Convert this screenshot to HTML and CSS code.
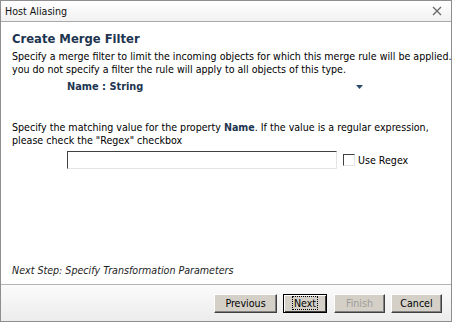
FILE: index.html
```html
<!DOCTYPE html>
<html>
    <head>
        <meta http-equiv="content-type" content="text/html; charset=utf-8" />
        <title>Host Aliasing</title>
        <link rel="stylesheet" href="styles.css">
    </head>
    <body>
        <div class="dialog">
            <div class="titlebar">
                <span class="title">Host Aliasing</span>
                <svg class="close" width="10" height="10" viewBox="0 0 10 10">
                    <path d="M1 1 L9 9 M9 1 L1 9" stroke="#6b6b6b" stroke-width="1.4" fill="none"/>
                </svg>
            </div>
            <div class="content">
                <h2>Create Merge Filter</h2>
                <p class="intro">Specify a merge filter to limit the incoming objects for which this merge rule will be applied. If<br>you do not specify a filter the rule will apply to all objects of this type.</p>
                <div class="property">
                    <span class="propname">Name : String</span>
                    <svg class="arrow" width="7" height="4" viewBox="0 0 7 4"><path d="M0 0 H7 L3.5 4 Z" fill="#2b4a6b"/></svg>
                </div>
                <p class="match">Specify the matching value for the property <b>Name</b>. If the value is a regular expression,<br>please check the "Regex" checkbox</p>
                <div class="valuerow">
                    <input type="text" class="value">
                    <label class="regex"><span class="check"></span>Use Regex</label>
                </div>
                <p class="nextstep">Next Step: Specify Transformation Parameters</p>
            </div>
            <div class="footer">
                <button class="btn prev">Previous</button>
                <button class="btn next"><span>Next</span></button>
                <button class="btn finish" disabled>Finish</button>
                <button class="btn cancel">Cancel</button>
            </div>
        </div>
    </body>
</html>
```

FILE: styles.css
```css
* {
    margin: 0;
    padding: 0;
    box-sizing: border-box;
}

body {
    width: 452px;
    height: 322px;
    overflow: hidden;
    background: #fff;
    font-family: "DejaVu Sans Condensed", "DejaVu Sans", sans-serif;
    font-size: 10.6px;
    color: #000;
}

.dialog {
    width: 452px;
    height: 322px;
    border: 1px solid #8e8e8e;
    display: flex;
    flex-direction: column;
    overflow: hidden;
}

.titlebar {
    height: 21px;
    flex: none;
    display: flex;
    align-items: center;
    justify-content: space-between;
    padding: 0 9px 0 4px;
    background: linear-gradient(#ffffff, #f1f1f1);
    border-bottom: 1px solid #a9a9a9;
}

.title {
    font-size: 10.6px;
    color: #111;
}

.content {
    flex: 1;
    padding: 9px 0 0 11px;
    overflow: hidden;
    white-space: nowrap;
    line-height: 13px;
}

h2 {
    font-family: "DejaVu Sans", sans-serif;
    font-size: 11.6px;
    font-weight: bold;
    color: #1d3550;
    line-height: 16px;
    margin-bottom: 3px;
}

.property {
    display: flex;
    align-items: center;
    width: 351px;
    justify-content: space-between;
    padding-left: 55px;
    margin-top: 4px;
}

.propname {
    font-family: "DejaVu Sans", sans-serif;
    font-weight: bold;
    font-size: 9.8px;
    color: #1d3550;
}

.match {
    margin-top: 28px;
}

.match b {
    color: #1d3550;
}

.valuerow {
    display: flex;
    align-items: center;
    padding-left: 55px;
    margin-top: 4px;
}

.value {
    width: 270px;
    height: 18px;
    border: 1px solid;
    border-color: #404040 #e4e4e4 #e4e4e4 #404040;
    outline: none;
}

.regex {
    display: flex;
    align-items: center;
    margin-left: 6px;
}

.check {
    width: 12px;
    height: 12px;
    margin-right: 3px;
    border: 1px solid;
    border-color: #404040 #e4e4e4 #e4e4e4 #404040;
    background: #fff;
}

.nextstep {
    font-style: italic;
    color: #222;
    margin-top: 95px;
}

.footer {
    height: 37px;
    flex: none;
    display: flex;
    align-items: center;
    justify-content: flex-end;
    padding-right: 9px;
    border-top: 1px solid #b4b4b4;
    background: linear-gradient(#fbfbfb, #ececec);
}

.btn {
    width: 51px;
    height: 19px;
    font-family: "DejaVu Sans Condensed", "DejaVu Sans", sans-serif;
    font-size: 10.6px;
    color: #000;
    background: #d4d0c8;
    border: 1px solid;
    border-color: #ffffff #404040 #404040 #ffffff;
    box-shadow: inset -1px -1px #808080;
}

.prev {
    width: 63px;
}

.next {
    width: 44px;
    margin-left: 6px;
    border-color: #000;
    box-shadow: inset 1px 1px #fff, inset -1px -1px #404040;
}

.next span {
    border: 1px dotted #000;
    padding: 0 1px;
}

.finish {
    margin-left: 7px;
    color: #a09d96;
}

.cancel {
    margin-left: 6px;
}
```
